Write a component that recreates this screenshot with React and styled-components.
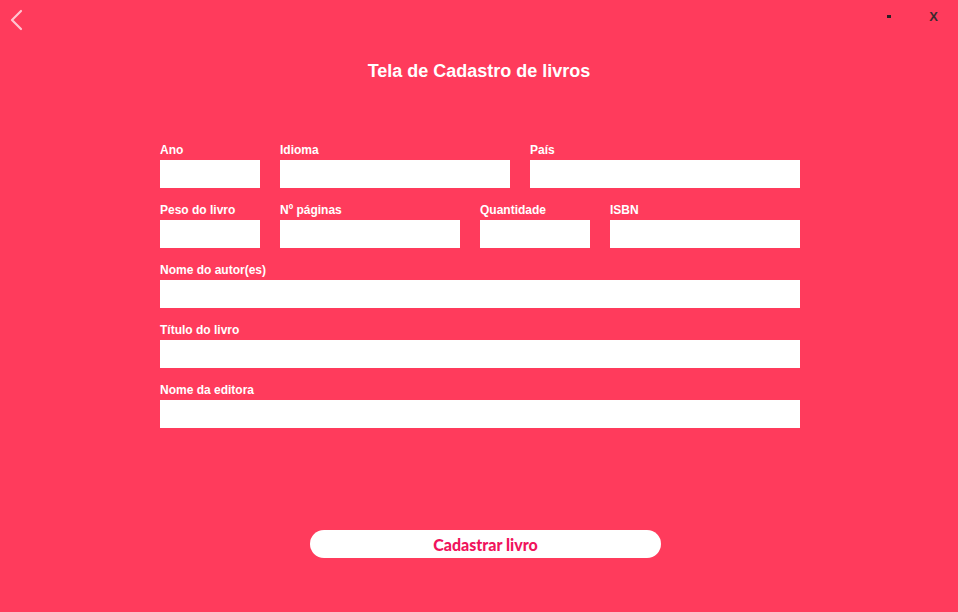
import React from 'react'
import styled, { createGlobalStyle } from 'styled-components'

const GlobalStyle = createGlobalStyle`
  html, body {
    margin: 0;
    padding: 0;
    background: #ff3b5c;
  }
  * { box-sizing: border-box; }
`;

const Page = styled.div`
  width: 958px;
  height: 612px;
  background: #ff3b5c;
  display: flex;
  flex-direction: column;
  font-family: "Liberation Sans", Arial, sans-serif;
  overflow: hidden;
`;

const TopBar = styled.div`
  height: 40px;
  display: flex;
  justify-content: space-between;
  align-items: flex-start;
`;

const BackButton = styled.button`
  border: none;
  background: none;
  padding: 0;
  margin: 9px 0 0 9px;
  width: 16px;
  height: 22px;
  cursor: pointer;
`;

const WindowControls = styled.div`
  display: flex;
  align-items: center;
  gap: 38px;
  margin: 9px 20px 0 0;
  height: 15px;
`;

const ControlButton = styled.button`
  border: none;
  background: none;
  padding: 0;
  font-family: "Liberation Sans", Arial, sans-serif;
  font-weight: bold;
  font-size: 13px;
  line-height: 15px;
  color: #3a2a2e;
  cursor: pointer;
`;

const MinimizeMark = styled.span`
  display: block;
  width: 4px;
  height: 3px;
  background: #2a2024;
`;

const Title = styled.h1`
  margin: 20px 0 0;
  text-align: center;
  font-size: 18px;
  line-height: 22px;
  font-weight: bold;
  color: #fff;
`;

const Form = styled.form`
  width: 640px;
  margin: 60px 0 0 160px;
  display: flex;
  flex-direction: column;
  gap: 14px;
`;

const Row = styled.div`
  display: grid;
  grid-template-columns: ${({ $cols }) => $cols};
  column-gap: 20px;
`;

const Field = styled.label`
  display: flex;
  flex-direction: column;
  gap: 2px;
`;

const LabelText = styled.span`
  font-size: 12px;
  line-height: 16px;
  font-weight: bold;
  color: #fff;
`;

const Input = styled.input`
  height: 28px;
  width: 100%;
  border: none;
  outline: none;
  background: #fff;
  padding: 0 6px;
  font-family: "Liberation Sans", Arial, sans-serif;
  font-size: 13px;
`;

const Footer = styled.div`
  margin-top: auto;
  margin-bottom: 54px;
  display: flex;
  justify-content: center;
`;

const SubmitButton = styled.button`
  width: 351px;
  height: 28px;
  margin-left: 13px;
  border: none;
  border-radius: 14px;
  background: #fff;
  color: #f0145c;
  font-family: Lato, "Open Sans", sans-serif;
  font-weight: 900;
  font-size: 16px;
  cursor: pointer;
`;

const rows = [
  { cols: '100px 230px 270px', fields: ['Ano', 'Idioma', 'País'] },
  { cols: '100px 180px 110px 190px', fields: ['Peso do livro', 'Nº páginas', 'Quantidade', 'ISBN'] },
  { cols: '1fr', fields: ['Nome do autor(es)'] },
  { cols: '1fr', fields: ['Título do livro'] },
  { cols: '1fr', fields: ['Nome da editora'] },
];

export default function App() {
  return (
    <Page>
      <GlobalStyle />
      <TopBar>
        <BackButton aria-label="Voltar">
          <svg width="16" height="22" viewBox="0 0 16 22">
            <path d="M12 2 L3 11 L12 20" fill="none" stroke="#ffc4d0" strokeWidth="2.2" strokeLinecap="round" strokeLinejoin="round" />
          </svg>
        </BackButton>
        <WindowControls>
          <ControlButton aria-label="Minimizar"><MinimizeMark /></ControlButton>
          <ControlButton>X</ControlButton>
        </WindowControls>
      </TopBar>
      <Title>Tela de Cadastro de livros</Title>
      <Form onSubmit={(e) => e.preventDefault()}>
        {rows.map((row, i) => (
          <Row key={i} $cols={row.cols}>
            {row.fields.map((f) => (
              <Field key={f}>
                <LabelText>{f}</LabelText>
                <Input type="text" />
              </Field>
            ))}
          </Row>
        ))}
      </Form>
      <Footer>
        <SubmitButton type="button">Cadastrar livro</SubmitButton>
      </Footer>
    </Page>
  )
}
